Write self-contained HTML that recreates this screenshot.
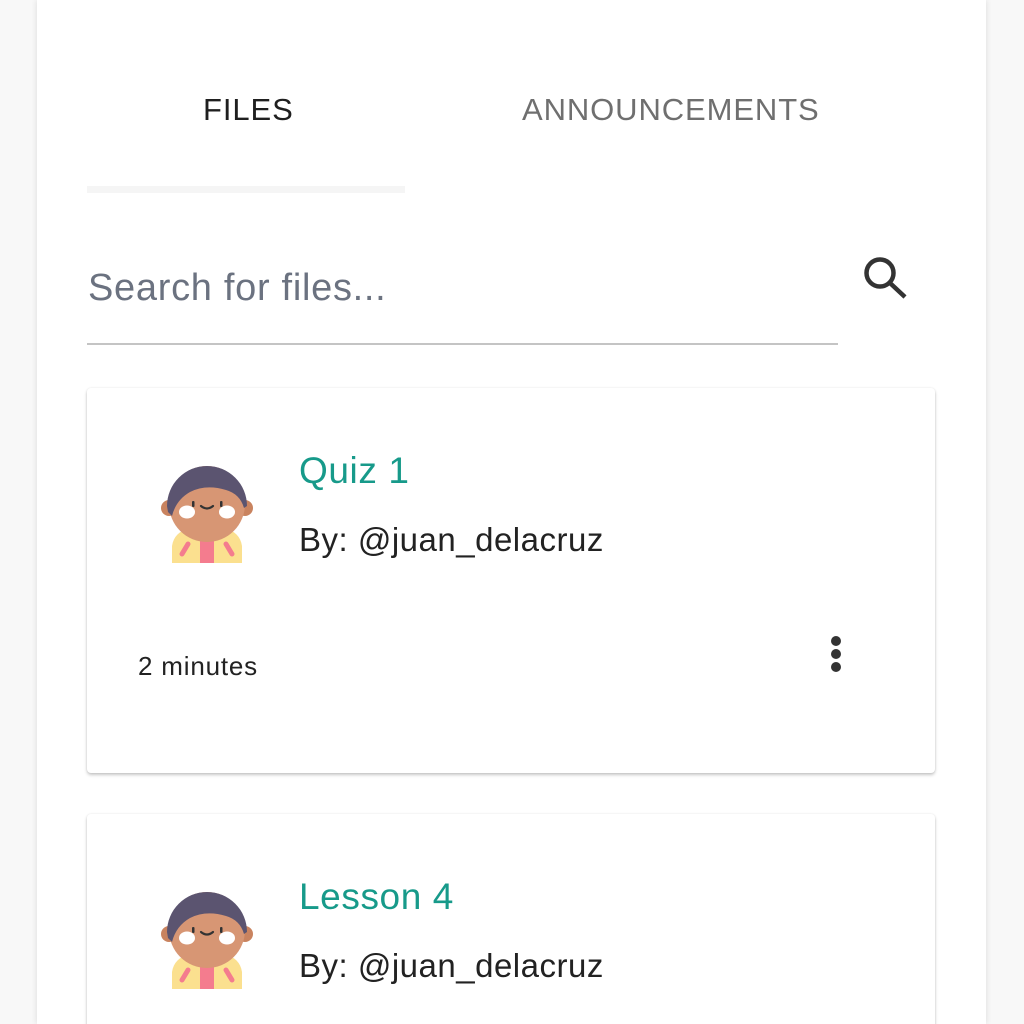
<!DOCTYPE html>
<html><head><meta charset="utf-8">
<style>
html,body{margin:0;padding:0;width:1024px;height:1024px;overflow:hidden;background:#f8f8f8;font-family:"Liberation Sans",Roboto,sans-serif;}
.wrap{position:relative;width:1024px;height:1024px;overflow:hidden;}
.panel{position:absolute;left:37px;top:0;width:949px;height:1024px;background:#fff;box-shadow:0 0 6px rgba(0,0,0,0.12);}
.tab{position:absolute;top:92px;font-size:31px;letter-spacing:0.9px;}
.ind{position:absolute;left:87px;top:186px;width:318px;height:7px;background:#f5f5f5;}
.search{position:absolute;left:88px;top:267px;font-size:38px;letter-spacing:0.7px;color:#6b7280;}
.line{position:absolute;left:87px;top:343px;width:751px;height:2px;background:#c4c4c4;}
.card{position:absolute;left:87px;width:848px;background:#fff;border-radius:4px;box-shadow:0 2px 3px rgba(0,0,0,0.22),0 0 2px rgba(0,0,0,0.08);}
.title{position:absolute;left:212px;font-size:37px;letter-spacing:0.6px;color:#179a8a;}
.by{position:absolute;left:212px;font-size:33px;letter-spacing:0.5px;color:#222;}
.av{position:absolute;left:73px;}
</style></head><body><div class="wrap">
<div class="panel"></div>
<div class="tab" style="left:203px;color:#1f1f1f">FILES</div>
<div class="tab" style="left:522px;color:#6f6f6f">ANNOUNCEMENTS</div>
<div class="ind"></div>
<div class="search">Search for files...</div>
<div class="line"></div>
<svg style="position:absolute;left:860px;top:254px" width="52" height="50" viewBox="0 0 52 50">
<circle cx="20" cy="19" r="13.5" fill="none" stroke="#333" stroke-width="4.5"/>
<line x1="30" y1="29" x2="45" y2="43" stroke="#333" stroke-width="4.5"/>
</svg>

<svg width="0" height="0" style="position:absolute">
<defs>
<g id="avatar">
<path d="M12 101 L12 84 Q14 70 30 66 L64 66 Q80 70 82 84 L82 101 Z" fill="#fbe08f"/>
<rect x="40" y="76" width="14" height="25" fill="#f47c8e"/>
<path d="M22 92 L28 82" stroke="#f47c8e" stroke-width="5" stroke-linecap="round"/>
<path d="M72 92 L66 82" stroke="#f47c8e" stroke-width="5" stroke-linecap="round"/>
<circle cx="9" cy="46" r="8" fill="#c9835f"/>
<circle cx="85" cy="46" r="8" fill="#c9835f"/>
<circle cx="47" cy="42" r="38" fill="#d79674"/>
<path d="M7 44 A40 40 0 0 1 87 44 L84 46 Q80 32 66 28 Q46 22 30 30 Q16 38 12 54 L8 50 Z" fill="#5b5470"/>
<ellipse cx="27" cy="50" rx="8" ry="6.5" fill="#fff"/>
<ellipse cx="67" cy="50" rx="8" ry="6.5" fill="#fff"/>
<rect x="32" y="39" width="2.5" height="6" rx="1" fill="#333"/>
<rect x="60" y="39" width="2.5" height="6" rx="1" fill="#333"/>
<path d="M41 44 Q47 49 53 44" fill="none" stroke="#333" stroke-width="2.2" stroke-linecap="round"/>
</g>
</defs></svg>

<div class="card" style="top:388px;height:385px">
<svg class="av" style="top:74px" width="94" height="101" viewBox="0 0 94 101"><use href="#avatar"/></svg>
<div class="title" style="top:62px">Quiz 1</div>
<div class="by" style="top:133px">By: @juan_delacruz</div>
<div style="position:absolute;left:51px;top:263px;font-size:26px;letter-spacing:0.8px;color:#222">2 minutes</div>
<svg style="position:absolute;left:740px;top:244px" width="20" height="44"><circle cx="9" cy="9" r="5" fill="#333"/><circle cx="9" cy="22" r="5" fill="#333"/><circle cx="9" cy="35" r="5" fill="#333"/></svg>
</div>

<div class="card" style="top:814px;height:240px">
<svg class="av" style="top:74px" width="94" height="101" viewBox="0 0 94 101"><use href="#avatar"/></svg>
<div class="title" style="top:62px">Lesson 4</div>
<div class="by" style="top:133px">By: @juan_delacruz</div>
</div>
</div></body></html>
